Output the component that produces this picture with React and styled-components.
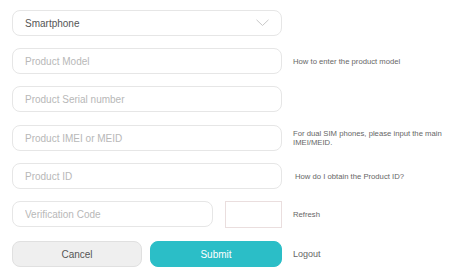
import React from 'react'
import styled, { createGlobalStyle } from 'styled-components'

const Global = createGlobalStyle`
  body {
    margin: 0;
    background: #fff;
    font-family: "Liberation Sans", Arial, sans-serif;
  }
`

const Form = styled.div`
  padding: 10px 4px 10px 12px;
  display: flex;
  flex-direction: column;
  gap: 12px;
`

const Row = styled.div`
  display: flex;
  align-items: center;
  gap: 11px;
  margin-top: ${p => p.nudge || 0}px;
`

const Field = styled.div`
  width: 270px;
  flex: none;
  display: flex;
  gap: ${p => p.gap || 0}px;
`

const Input = styled.input`
  box-sizing: border-box;
  width: ${p => p.w || 270}px;
  height: 26px;
  border: 1px solid #e6e6e6;
  border-radius: 8px;
  padding: 0 12px;
  font-family: inherit;
  font-size: 10px;
  color: #555;
  outline: none;
  background: #fff;

  &::placeholder {
    color: #b8b8b8;
  }
`

const Select = styled.div`
  box-sizing: border-box;
  width: 270px;
  height: 26px;
  border: 1px solid #e6e6e6;
  border-radius: 8px;
  padding: 0 12px;
  display: flex;
  align-items: center;
  justify-content: space-between;
  font-size: 10px;
  color: #555;
`

const Captcha = styled.div`
  box-sizing: border-box;
  width: 57px;
  height: 27px;
  border: 1px solid #eadede;
`

const Help = styled.div`
  font-size: ${p => p.size || 7.7}px;
  line-height: 9px;
  color: #666;
  padding-left: ${p => p.indent || 0}px;
  max-width: 156px;
`

const Button = styled.button`
  box-sizing: border-box;
  width: ${p => p.w}px;
  height: 26px;
  border-radius: 8px;
  font-family: inherit;
  font-size: 10px;
  cursor: pointer;
  border: 1px solid ${p => (p.primary ? '#2bbec7' : '#e0e0e0')};
  background: ${p => (p.primary ? '#2bbec7' : '#efefef')};
  color: ${p => (p.primary ? '#fff' : '#555')};
`

const Chevron = () => (
  <svg width="13" height="8" viewBox="0 0 13 8">
    <path d="M0.5 0.8 L6.5 6.5 L12.5 0.8" fill="none" stroke="#c8c8c8" strokeWidth="1" />
  </svg>
)

const App = () => (
  <>
    <Global />
    <Form>
      <Row>
        <Select>
          <span>Smartphone</span>
          <Chevron />
        </Select>
      </Row>
      <Row>
        <Field><Input placeholder="Product Model" /></Field>
        <Help>How to enter the product model</Help>
      </Row>
      <Row>
        <Field><Input placeholder="Product Serial number" /></Field>
      </Row>
      <Row nudge={1}>
        <Field><Input placeholder="Product IMEI or MEID" /></Field>
        <Help>For dual SIM phones, please input the main IMEI/MEID.</Help>
      </Row>
      <Row>
        <Field><Input placeholder="Product ID" /></Field>
        <Help indent={2}>How do I obtain the Product ID?</Help>
      </Row>
      <Row>
        <Field gap={12}>
          <Input w={201} placeholder="Verification Code" />
          <Captcha />
        </Field>
        <Help>Refresh</Help>
      </Row>
      <Row nudge={1}>
        <Field gap={8}>
          <Button w={130}>Cancel</Button>
          <Button w={132} primary>Submit</Button>
        </Field>
        <Help size={9}>Logout</Help>
      </Row>
    </Form>
  </>
)

export default App
